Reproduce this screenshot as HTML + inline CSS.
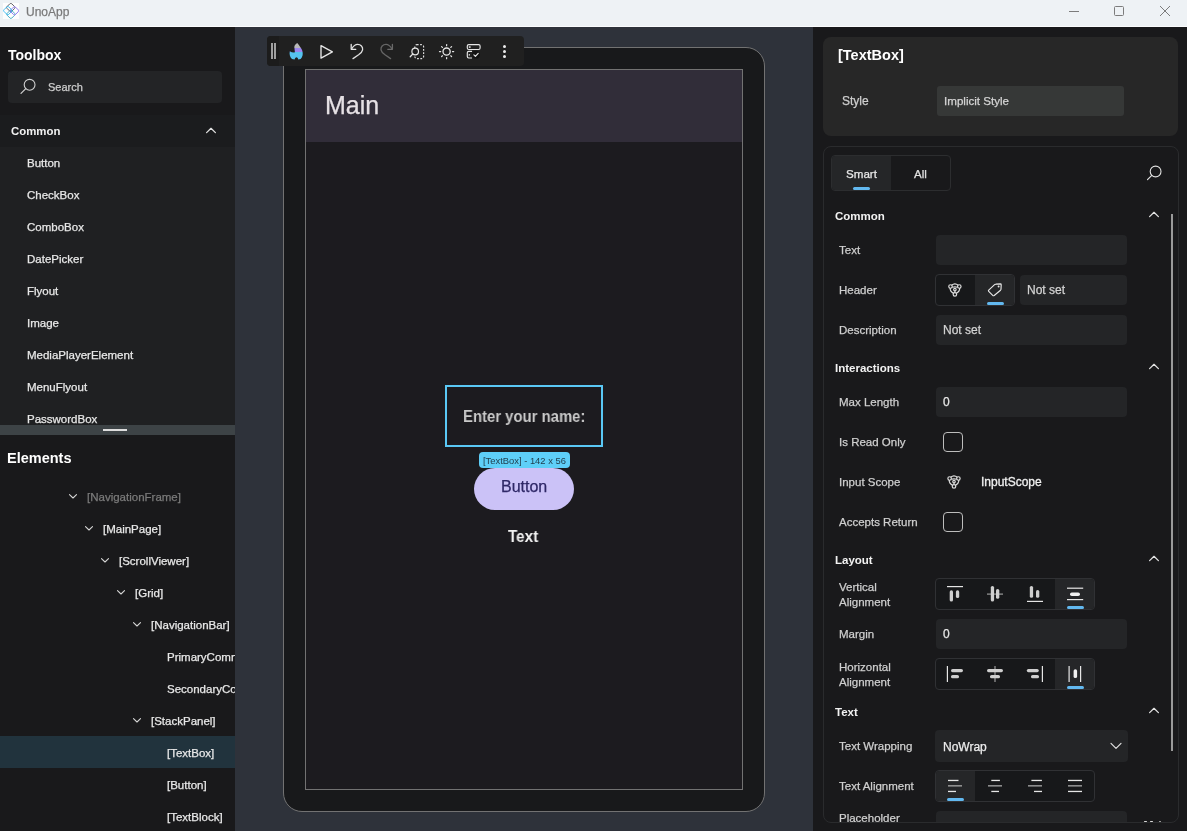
<!DOCTYPE html>
<html><head><meta charset="utf-8">
<style>
*{margin:0;padding:0;box-sizing:border-box}
html,body{width:1187px;height:831px;overflow:hidden;background:#19191b;font-family:"Liberation Sans",sans-serif;color:#e6e6e6;position:relative}
.a{position:absolute}
.t{position:absolute;white-space:nowrap;line-height:1;will-change:transform;-webkit-text-stroke:0.25px currentColor}
.tb{-webkit-text-stroke:0}
.clip{position:absolute;overflow:hidden}
.in{position:absolute}
</style></head><body>
<div class="a" style="left:0px;top:0px;width:1187px;height:27px;background:#eef2f5;"></div>
<div class="a" style="left:0px;top:26px;width:1187px;height:1px;background:#fbfcfd;"></div>
<svg class="a" style="left:3px;top:3px" width="16" height="16" viewBox="0 0 16 16"><rect width="16" height="16" fill="#fdfdfd"/><rect x="4.5" y="1.2000000000000002" width="6.6" height="6.6" rx="1.3" transform="rotate(45 7.8 4.5)" fill="none" stroke="#505058" stroke-width="0.85"/><rect x="4.6000000000000005" y="8.0" width="6.6" height="6.6" rx="1.3" transform="rotate(45 7.9 11.3)" fill="none" stroke="#3aa6c0" stroke-width="0.85"/><rect x="8.2" y="4.5" width="6.6" height="6.6" rx="1.3" transform="rotate(45 11.5 7.8)" fill="none" stroke="#8a6cf2" stroke-width="0.85"/><rect x="1.5" y="4.3" width="6.6" height="6.6" rx="1.3" transform="rotate(45 4.8 7.6)" fill="none" stroke="#2eb6f2" stroke-width="0.85"/></svg>
<div class="t" style="left:26px;top:5.84px;font-size:12px;color:#7a7a7a;">UnoApp</div>
<div class="a" style="left:1069px;top:11px;width:10px;height:1px;background:#7c7c7c;"></div>
<div class="a" style="left:1114px;top:6px;width:10px;height:10px;border:1px solid #7c7c7c;border-radius:1.5px"></div>
<svg class="a" style="left:1159px;top:5px" width="12" height="12" viewBox="0 0 12 12"><path d="M1 1L11 11M11 1L1 11" stroke="#7c7c7c" stroke-width="1"/></svg>
<div class="clip" style="left:0;top:27px;width:235px;height:804px;background:#19191b"><div class="in" style="left:0;top:-27px">
<div class="t tb" style="left:8px;top:48.15px;font-size:14px;color:#ffffff;font-weight:bold;">Toolbox</div>
<div class="a" style="left:8px;top:71px;width:214px;height:32px;background:#232426;border-radius:4px"></div>
<svg class="a" style="left:19px;top:78px" width="18" height="18" viewBox="0 0 18 18"><circle cx="10.6" cy="6.8" r="5.4" fill="none" stroke="#cfcfcf" stroke-width="1.1"/><path d="M6.8 10.6L2 15.4" stroke="#cfcfcf" stroke-width="1.2" stroke-linecap="round"/></svg>
<div class="t" style="left:48px;top:81.99px;font-size:11px;color:#cdcdcd;">Search</div>
<div class="a" style="left:0px;top:115px;width:235px;height:32px;background:#1b1c1e;"></div>
<div class="a" style="left:0px;top:147px;width:235px;height:278px;background:#1f2022;"></div>
<div class="t tb" style="left:11px;top:125.65px;font-size:11.4px;color:#f2f2f2;font-weight:bold;">Common</div>
<svg class="a" style="left:204px;top:126px" width="14" height="9" viewBox="0 0 14 9"><path d="M2.6 6.6L7 2.3L11.4 6.6" fill="none" stroke="#e2e2e2" stroke-width="1.25" stroke-linecap="round" stroke-linejoin="round"/></svg>
<div class="t" style="left:27px;top:157.77px;font-size:11.5px;color:#e8e8e8;">Button</div>
<div class="t" style="left:27px;top:189.77px;font-size:11.5px;color:#e8e8e8;">CheckBox</div>
<div class="t" style="left:27px;top:221.77px;font-size:11.5px;color:#e8e8e8;">ComboBox</div>
<div class="t" style="left:27px;top:253.77px;font-size:11.5px;color:#e8e8e8;">DatePicker</div>
<div class="t" style="left:27px;top:285.77px;font-size:11.5px;color:#e8e8e8;">Flyout</div>
<div class="t" style="left:27px;top:317.77px;font-size:11.5px;color:#e8e8e8;">Image</div>
<div class="t" style="left:27px;top:349.77px;font-size:11.5px;color:#e8e8e8;">MediaPlayerElement</div>
<div class="t" style="left:27px;top:381.77px;font-size:11.5px;color:#e8e8e8;">MenuFlyout</div>
<div class="t" style="left:27px;top:413.77px;font-size:11.5px;color:#e8e8e8;">PasswordBox</div>
<div class="a" style="left:0px;top:425px;width:235px;height:10px;background:#3d4346;"></div>
<div class="a" style="left:103px;top:429px;width:24px;height:2px;background:#dedede;"></div>
<div class="t tb" style="left:7px;top:450.93px;font-size:14.5px;color:#ffffff;font-weight:bold;">Elements</div>
<div class="a" style="left:0px;top:736px;width:235px;height:32px;background:#21333d;"></div>
<svg class="a" style="left:68px;top:493px" width="10" height="7" viewBox="0 0 10 7"><path d="M1.5 1.7L5 5L8.5 1.7" fill="none" stroke="#d6d6d6" stroke-width="1.1" stroke-linecap="round" stroke-linejoin="round"/></svg>
<div class="t" style="left:87px;top:491.57px;font-size:11.5px;color:#7a7a7a;">[NavigationFrame]</div>
<svg class="a" style="left:84px;top:525px" width="10" height="7" viewBox="0 0 10 7"><path d="M1.5 1.7L5 5L8.5 1.7" fill="none" stroke="#d6d6d6" stroke-width="1.1" stroke-linecap="round" stroke-linejoin="round"/></svg>
<div class="t" style="left:103px;top:523.57px;font-size:11.5px;color:#e8e8e8;">[MainPage]</div>
<svg class="a" style="left:100px;top:557px" width="10" height="7" viewBox="0 0 10 7"><path d="M1.5 1.7L5 5L8.5 1.7" fill="none" stroke="#d6d6d6" stroke-width="1.1" stroke-linecap="round" stroke-linejoin="round"/></svg>
<div class="t" style="left:119px;top:555.57px;font-size:11.5px;color:#e8e8e8;">[ScrollViewer]</div>
<svg class="a" style="left:116px;top:589px" width="10" height="7" viewBox="0 0 10 7"><path d="M1.5 1.7L5 5L8.5 1.7" fill="none" stroke="#d6d6d6" stroke-width="1.1" stroke-linecap="round" stroke-linejoin="round"/></svg>
<div class="t" style="left:135px;top:587.57px;font-size:11.5px;color:#e8e8e8;">[Grid]</div>
<svg class="a" style="left:132px;top:621px" width="10" height="7" viewBox="0 0 10 7"><path d="M1.5 1.7L5 5L8.5 1.7" fill="none" stroke="#d6d6d6" stroke-width="1.1" stroke-linecap="round" stroke-linejoin="round"/></svg>
<div class="t" style="left:151px;top:619.57px;font-size:11.5px;color:#e8e8e8;">[NavigationBar]</div>
<div class="t" style="left:167px;top:651.57px;font-size:11.5px;color:#e8e8e8;">PrimaryCommands</div>
<div class="t" style="left:167px;top:683.57px;font-size:11.5px;color:#e8e8e8;">SecondaryCommands</div>
<svg class="a" style="left:132px;top:717px" width="10" height="7" viewBox="0 0 10 7"><path d="M1.5 1.7L5 5L8.5 1.7" fill="none" stroke="#d6d6d6" stroke-width="1.1" stroke-linecap="round" stroke-linejoin="round"/></svg>
<div class="t" style="left:151px;top:715.57px;font-size:11.5px;color:#e8e8e8;">[StackPanel]</div>
<div class="t" style="left:167px;top:747.57px;font-size:11.5px;color:#e8e8e8;">[TextBox]</div>
<div class="t" style="left:167px;top:779.57px;font-size:11.5px;color:#e8e8e8;">[Button]</div>
<div class="t" style="left:167px;top:811.57px;font-size:11.5px;color:#e8e8e8;">[TextBlock]</div>
</div></div>
<div class="clip" style="left:235px;top:27px;width:578px;height:804px;background:#2e323a"><div class="in" style="left:-235px;top:-27px">
<div class="a" style="left:283px;top:47px;width:482px;height:765px;background:#18191b;border:1px solid #727272;border-radius:19px"></div>
<div class="a" style="left:305px;top:69px;width:438px;height:721px;background:#1c1b1f;border:1px solid #727272"></div>
<div class="a" style="left:306px;top:70px;width:436px;height:72px;background:#312d39;"></div>
<div class="t" style="left:324.5px;top:93.04px;font-size:25px;color:#e6e1e5;">Main</div>
<div class="a" style="left:267px;top:36px;width:257px;height:30px;background:#202020;border-radius:4px"></div>
<div class="a" style="left:267px;top:36px;width:12px;height:30px;background:#1c1c1c;border-radius:4px 0 0 4px"></div>
<div class="a" style="left:271px;top:43px;width:2px;height:16px;background:#a0a0a0;"></div>
<div class="a" style="left:274px;top:43px;width:2px;height:16px;background:#a0a0a0;"></div>
<svg class="a" style="left:286px;top:40px" width="20" height="22" viewBox="286 40 20 22"><defs><linearGradient id="fl" gradientUnits="userSpaceOnUse" x1="0" y1="43" x2="0" y2="59.5"><stop offset="0" stop-color="#b8b8b8"/><stop offset="0.3" stop-color="#b8b8b8"/><stop offset="0.3" stop-color="#9b86ee"/><stop offset="0.54" stop-color="#9b86ee"/><stop offset="0.54" stop-color="#56c3f0"/><stop offset="1" stop-color="#56c3f0"/></linearGradient></defs><path d="M297.2 43C294.8 44.4 293.8 46.6 294.5 48.6L294.9 52.3C293.4 52.9 291.6 52.4 289.8 51.3C289.2 54.3 289.9 57.3 292 59.1L294.6 59.4C295 58.2 295.8 57.3 296.6 57.3C297.4 57.3 298 58.4 298.3 59.4L300.6 59C302.6 57.4 303 54.4 302.6 52C302.2 49.6 300.8 47.6 299.7 46.2C298.9 45.1 298.2 44 297.2 43Z" fill="url(#fl)"/></svg>
<svg class="a" style="left:318px;top:43px" width="17" height="17" viewBox="318 43 17 17"><path d="M321 45.6L332.4 51.8L321 58.1Z" fill="none" stroke="#e6e6e6" stroke-width="1.35" stroke-linejoin="round"/></svg>
<svg class="a" style="left:348px;top:42px" width="18" height="19" viewBox="348 42 18 19"><path d="M351.2 44.4V49.3H355.8" fill="none" stroke="#e6e6e6" stroke-width="1.3" stroke-linecap="round" stroke-linejoin="round"/><path d="M351.6 48.8Q354.4 44.4 357.6 44.4C360.8 44.4 363 47 362.6 49.8C362.3 51.6 361 53 358.6 54.8L353 58.6" fill="none" stroke="#e0e0e0" stroke-width="1.3" stroke-linecap="round"/></svg>
<svg class="a" style="left:378px;top:42px" width="18" height="19" viewBox="378 42 18 19"><path d="M392.4 44.4V49.3H387.8" fill="none" stroke="#6a6a6a" stroke-width="1.3" stroke-linecap="round" stroke-linejoin="round"/><path d="M392 48.8Q389.2 44.4 386 44.4C382.8 44.4 380.6 47 381 49.8C381.3 51.6 382.6 53 385 54.8L390.6 58.6" fill="none" stroke="#666666" stroke-width="1.3" stroke-linecap="round"/></svg>
<svg class="a" style="left:406px;top:41px" width="22" height="21" viewBox="406 41 22 21"><rect x="414.8" y="44.7" width="8.8" height="13.9" rx="2" fill="none" stroke="#dcdcdc" stroke-width="1.2" stroke-dasharray="1.8 1.5"/><circle cx="415.2" cy="51.5" r="3.3" fill="#1f1f1f" stroke="#e6e6e6" stroke-width="1.2"/><path d="M412.9 53.9L410.2 56.8" stroke="#e6e6e6" stroke-width="1.3" stroke-linecap="round"/></svg>
<svg class="a" style="left:436px;top:41px" width="21" height="21" viewBox="436 41 21 21"><circle cx="446.6" cy="51.6" r="3.6" fill="none" stroke="#e6e6e6" stroke-width="1.3"/><path d="M452.50 51.60L453.70 51.60" stroke="#e6e6e6" stroke-width="1.2" stroke-linecap="round"/><path d="M450.77 55.77L451.62 56.62" stroke="#e6e6e6" stroke-width="1.2" stroke-linecap="round"/><path d="M446.60 57.50L446.60 58.70" stroke="#e6e6e6" stroke-width="1.2" stroke-linecap="round"/><path d="M442.43 55.77L441.58 56.62" stroke="#e6e6e6" stroke-width="1.2" stroke-linecap="round"/><path d="M440.70 51.60L439.50 51.60" stroke="#e6e6e6" stroke-width="1.2" stroke-linecap="round"/><path d="M442.43 47.43L441.58 46.58" stroke="#e6e6e6" stroke-width="1.2" stroke-linecap="round"/><path d="M446.60 45.70L446.60 44.50" stroke="#e6e6e6" stroke-width="1.2" stroke-linecap="round"/><path d="M450.77 47.43L451.62 46.58" stroke="#e6e6e6" stroke-width="1.2" stroke-linecap="round"/></svg>
<svg class="a" style="left:464px;top:41px" width="20" height="20" viewBox="464 41 20 20"><rect x="467.3" y="44.6" width="12.8" height="4.9" rx="1.5" fill="none" stroke="#e6e6e6" stroke-width="1.15"/><rect x="468.8" y="46.3" width="1.8" height="1.5" fill="#e6e6e6"/><path d="M472 51.4L468.7 51.4Q467.3 51.4 467.3 52.8L467.3 56.6Q467.3 58 468.7 58L472 58" fill="none" stroke="#e6e6e6" stroke-width="1.15"/><rect x="468.7" y="54.2" width="1.3" height="1.3" fill="#e6e6e6"/><circle cx="476" cy="54.7" r="3.9" fill="#131313"/><path d="M473.9 54.8L475.4 56.3L478.2 53.3" fill="none" stroke="#e6e6e6" stroke-width="1.15" stroke-linecap="round" stroke-linejoin="round"/></svg>
<div class="a" style="left:503px;top:45.2px;width:3px;height:3px;border-radius:50%;background:#ececec"></div>
<div class="a" style="left:503px;top:50.1px;width:3px;height:3px;border-radius:50%;background:#ececec"></div>
<div class="a" style="left:503px;top:55.0px;width:3px;height:3px;border-radius:50%;background:#ececec"></div>
<div class="a" style="left:445px;top:385px;width:158px;height:62px;border:2px solid #5ac8f5"></div>
<div class="t tb" style="left:463px;top:408.76px;font-size:16px;color:#c9c9c9;font-weight:bold;transform:scaleX(0.93);transform-origin:0 0;">Enter your name:</div>
<div class="a" style="left:479px;top:452px;width:91px;height:16px;background:#5ecff8;border-radius:4px"></div>
<div class="t tb" style="left:483px;top:456.04px;font-size:9.4px;color:#22404f;font-weight:bold;-webkit-text-stroke:0;font-weight:normal;">[TextBox] - 142 x 56</div>
<div class="a" style="left:474px;top:468px;width:100px;height:42px;background:#cbc2f7;border-radius:21px"></div>
<div class="t" style="left:501px;top:479.36px;font-size:16px;color:#2e2766;">Button</div>
<div class="t tb" style="left:508px;top:529.06px;font-size:16px;color:#f2f2f2;font-weight:bold;transform:scaleX(0.95);transform-origin:0 0;">Text</div>
</div></div>
<div class="a" style="left:823px;top:37px;width:355px;height:99px;background:#272727;border-radius:8px"></div>
<div class="t tb" style="left:838px;top:48.03px;font-size:14.5px;color:#ffffff;font-weight:bold;">[TextBox]</div>
<div class="t" style="left:842px;top:94.84px;font-size:12px;color:#cfcfcf;">Style</div>
<div class="a" style="left:937px;top:86px;width:187px;height:30px;background:#363837;border-radius:3px"></div>
<div class="t" style="left:944px;top:95.48px;font-size:11.6px;color:#d4d4d4;">Implicit Style</div>
<div class="a" style="left:823px;top:146px;width:356px;height:677px;border:1px solid #2a2b2d;border-radius:8px"></div>
<div class="clip" style="left:824px;top:147px;width:354px;height:675px;border-radius:0 0 7px 7px"><div class="in" style="left:-824px;top:-147px">
<div class="a" style="left:831px;top:155px;width:120px;height:36px;border:1px solid #2c2d2f;border-radius:4px;background:#19191b;overflow:hidden"><div class="a" style="left:0;top:0;width:59px;height:34px;background:#252628"></div></div>
<div class="t" style="left:846px;top:168.08px;font-size:11.6px;color:#e8e8e8;">Smart</div>
<div class="t" style="left:914px;top:168.08px;font-size:11.6px;color:#e0e0e0;">All</div>
<div class="a" style="left:853px;top:187px;width:17px;height:3px;background:#62b8ef;border-radius:1.5px"></div>
<svg class="a" style="left:1145px;top:164px" width="18" height="18" viewBox="0 0 18 18"><circle cx="10.6" cy="7.5" r="5.4" fill="none" stroke="#e0e0e0" stroke-width="1.1"/><path d="M6.8 11.3L2.5 15.6" stroke="#e0e0e0" stroke-width="1.2" stroke-linecap="round"/></svg>
<div class="a" style="left:1171px;top:214px;width:2px;height:537px;background:#9a9a9a;"></div>
<div class="t tb" style="left:835px;top:211.17px;font-size:11.5px;color:#f2f2f2;font-weight:bold;">Common</div>
<svg class="a" style="left:1147px;top:210px" width="14" height="9" viewBox="0 0 14 9"><path d="M2.6 6.6L7 2.3L11.4 6.6" fill="none" stroke="#e2e2e2" stroke-width="1.25" stroke-linecap="round" stroke-linejoin="round"/></svg>
<div class="t" style="left:839px;top:244.57px;font-size:11.5px;color:#cfcfcf;">Text</div>
<div class="a" style="left:936px;top:235px;width:191px;height:30px;background:#242527;border-radius:4px"></div>
<div class="t" style="left:839px;top:284.57px;font-size:11.5px;color:#cfcfcf;">Header</div>
<div class="a" style="left:935px;top:274px;width:80px;height:32px;border:1px solid #303134;border-radius:4px;background:#17181a;overflow:hidden"><div class="a" style="left:39px;top:0;width:39px;height:30px;background:#252628"></div></div>
<svg class="a" style="left:945px;top:280px" width="20" height="20" viewBox="945 280 20 20"><g fill="none" stroke="#dcdcdc" stroke-width="1.2" transform="translate(0.00 0.00)"><circle cx="950.5" cy="286.5" r="1.75"/><circle cx="959.3" cy="286.5" r="1.75"/><circle cx="954.9" cy="294.4" r="1.75"/><circle cx="954.9" cy="289.6" r="1.25"/><path d="M951.6 285.2Q954.9 282.4 958.2 285.2"/><path d="M952.2 287.3Q954.9 286.3 957.6 287.3"/><path d="M950.1 288.1Q950 291.6 953.5 293.4M959.7 288.1Q959.8 291.6 956.3 293.4M954.9 290.9V292.7"/></g></svg>
<svg class="a" style="left:985px;top:280px" width="20" height="20" viewBox="985 280 20 20"><path d="M988.7 290.1L994.6 284.6Q995.2 284.1 996 284.1L1000.4 283.9Q1001.2 283.9 1001.2 284.7L1001 289Q1001 289.7 1000.5 290.2L994.2 295.5Q993.4 296.1 992.7 295.4L988.7 291.4Q988.1 290.8 988.7 290.1Z" fill="none" stroke="#e8e8e8" stroke-width="1.15" stroke-linejoin="round"/><circle cx="998.6" cy="286.5" r="0.95" fill="#e8e8e8"/></svg>
<div class="a" style="left:987px;top:302px;width:17px;height:3px;background:#62b8ef;border-radius:1.5px"></div>
<div class="a" style="left:1020px;top:275px;width:107px;height:30px;background:#242527;border-radius:4px"></div>
<div class="t" style="left:1027px;top:284.14px;font-size:12px;color:#d4d4d4;">Not set</div>
<div class="t" style="left:839px;top:324.57px;font-size:11.5px;color:#cfcfcf;">Description</div>
<div class="a" style="left:936px;top:315px;width:191px;height:30px;background:#242527;border-radius:4px"></div>
<div class="t" style="left:943px;top:324.14px;font-size:12px;color:#d4d4d4;">Not set</div>
<div class="t tb" style="left:835px;top:363.17px;font-size:11.5px;color:#f2f2f2;font-weight:bold;">Interactions</div>
<svg class="a" style="left:1147px;top:362px" width="14" height="9" viewBox="0 0 14 9"><path d="M2.6 6.6L7 2.3L11.4 6.6" fill="none" stroke="#e2e2e2" stroke-width="1.25" stroke-linecap="round" stroke-linejoin="round"/></svg>
<div class="t" style="left:839px;top:396.57px;font-size:11.5px;color:#cfcfcf;">Max Length</div>
<div class="a" style="left:936px;top:387px;width:191px;height:30px;background:#242527;border-radius:4px"></div>
<div class="t" style="left:943px;top:396.14px;font-size:12px;color:#e8e8e8;">0</div>
<div class="t" style="left:839px;top:436.57px;font-size:11.5px;color:#cfcfcf;">Is Read Only</div>
<div class="a" style="left:943px;top:432px;width:20px;height:20px;border:1px solid #bdbdbd;border-radius:4px"></div>
<div class="t" style="left:839px;top:476.57px;font-size:11.5px;color:#cfcfcf;">Input Scope</div>
<svg class="a" style="left:944px;top:472px" width="20" height="20" viewBox="944 472 20 20"><g fill="none" stroke="#dcdcdc" stroke-width="1.2" transform="translate(-0.90 192.00)"><circle cx="950.5" cy="286.5" r="1.75"/><circle cx="959.3" cy="286.5" r="1.75"/><circle cx="954.9" cy="294.4" r="1.75"/><circle cx="954.9" cy="289.6" r="1.25"/><path d="M951.6 285.2Q954.9 282.4 958.2 285.2"/><path d="M952.2 287.3Q954.9 286.3 957.6 287.3"/><path d="M950.1 288.1Q950 291.6 953.5 293.4M959.7 288.1Q959.8 291.6 956.3 293.4M954.9 290.9V292.7"/></g></svg>
<div class="t" style="left:981px;top:475.64px;font-size:12px;color:#f0f0f0;-webkit-text-stroke:0.3px #f0f0f0">InputScope</div>
<div class="t" style="left:839px;top:516.57px;font-size:11.5px;color:#cfcfcf;">Accepts Return</div>
<div class="a" style="left:943px;top:512px;width:20px;height:20px;border:1px solid #bdbdbd;border-radius:4px"></div>
<div class="t tb" style="left:835px;top:554.77px;font-size:11.5px;color:#f2f2f2;font-weight:bold;">Layout</div>
<svg class="a" style="left:1147px;top:554px" width="14" height="9" viewBox="0 0 14 9"><path d="M2.6 6.6L7 2.3L11.4 6.6" fill="none" stroke="#e2e2e2" stroke-width="1.25" stroke-linecap="round" stroke-linejoin="round"/></svg>
<div class="t" style="left:839px;top:581.57px;font-size:11.5px;color:#cfcfcf;">Vertical</div>
<div class="t" style="left:839px;top:596.57px;font-size:11.5px;color:#cfcfcf;">Alignment</div>
<div class="a" style="left:935px;top:578px;width:160px;height:32px;border:1px solid #303134;border-radius:4px;background:#17181a;overflow:hidden"><div class="a" style="left:119px;top:0;width:39px;height:30px;background:#252628"></div></div>
<svg class="a" style="left:0;top:0" width="1187" height="831"><rect x="987" y="593.5" width="16" height="1.2" fill="#9a9a9a"/><g fill="#cfcfcf"><rect x="949.7" y="590.3" width="3.3" height="11.3" rx="1.6"/><rect x="955.9" y="590.3" width="3.3" height="7.7" rx="1.6"/><rect x="990.8" y="586" width="3.3" height="15.6" rx="1.6"/><rect x="996" y="588.9" width="3.3" height="9.9" rx="1.6"/><rect x="1029.8" y="586" width="3.3" height="11.8" rx="1.6"/><rect x="1036" y="589.9" width="3.3" height="7.9" rx="1.6"/><rect x="1070" y="592.4" width="10" height="3.6" rx="1.8" fill="#f0f0f0"/></g><g fill="#e6e6e6"><rect x="947" y="586" width="16" height="1.2"/><rect x="1027" y="600.8" width="16" height="1.2"/><rect x="1067" y="587.6" width="16.2" height="1.2"/><rect x="1067" y="599" width="16.2" height="1.2"/></g></svg>
<div class="a" style="left:1067px;top:606px;width:17px;height:3px;background:#62b8ef;border-radius:1.5px"></div>
<div class="t" style="left:839px;top:628.57px;font-size:11.5px;color:#cfcfcf;">Margin</div>
<div class="a" style="left:936px;top:619px;width:191px;height:30px;background:#242527;border-radius:4px"></div>
<div class="t" style="left:943px;top:628.14px;font-size:12px;color:#e8e8e8;">0</div>
<div class="t" style="left:839px;top:661.57px;font-size:11.5px;color:#cfcfcf;">Horizontal</div>
<div class="t" style="left:839px;top:676.57px;font-size:11.5px;color:#cfcfcf;">Alignment</div>
<div class="a" style="left:935px;top:658px;width:160px;height:32px;border:1px solid #303134;border-radius:4px;background:#17181a;overflow:hidden"><div class="a" style="left:119px;top:0;width:39px;height:30px;background:#252628"></div></div>
<svg class="a" style="left:0;top:0" width="1187" height="831"><rect x="994.4" y="666" width="1.2" height="16" fill="#9a9a9a"/><g fill="#cfcfcf"><rect x="951" y="668.9" width="12" height="3.3" rx="1.6"/><rect x="951" y="675" width="8" height="3.3" rx="1.6"/><rect x="987" y="668.9" width="16" height="3.3" rx="1.6"/><rect x="990" y="675" width="10" height="3.3" rx="1.6"/><rect x="1026.8" y="668.9" width="12" height="3.3" rx="1.6"/><rect x="1031" y="675" width="8" height="3.3" rx="1.6"/><rect x="1073.6" y="669.3" width="3.5" height="8.8" rx="1.7" fill="#f0f0f0"/></g><g fill="#e6e6e6"><rect x="946.8" y="666" width="1.2" height="16"/><rect x="1041.8" y="666" width="1.2" height="16"/><rect x="1068.5" y="666" width="1.2" height="16"/><rect x="1080" y="666" width="1.2" height="16"/></g></svg>
<div class="a" style="left:1067px;top:686px;width:17px;height:3px;background:#62b8ef;border-radius:1.5px"></div>
<div class="t tb" style="left:835px;top:707.27px;font-size:11.5px;color:#f2f2f2;font-weight:bold;">Text</div>
<svg class="a" style="left:1147px;top:706px" width="14" height="9" viewBox="0 0 14 9"><path d="M2.6 6.6L7 2.3L11.4 6.6" fill="none" stroke="#e2e2e2" stroke-width="1.25" stroke-linecap="round" stroke-linejoin="round"/></svg>
<div class="t" style="left:839px;top:740.57px;font-size:11.5px;color:#cfcfcf;">Text Wrapping</div>
<div class="a" style="left:935px;top:730px;width:193px;height:32px;background:#242527;border-radius:4px"></div>
<div class="t" style="left:943px;top:741.04px;font-size:12px;color:#ececec;">NoWrap</div>
<svg class="a" style="left:1109px;top:741px" width="14" height="10" viewBox="0 0 14 10"><path d="M2 2.4L7 7.4L12 2.4" fill="none" stroke="#e0e0e0" stroke-width="1.2" stroke-linecap="round" stroke-linejoin="round"/></svg>
<div class="t" style="left:839px;top:780.57px;font-size:11.5px;color:#cfcfcf;">Text Alignment</div>
<div class="a" style="left:935px;top:770px;width:160px;height:32px;border:1px solid #303134;border-radius:4px;background:#17181a;overflow:hidden"><div class="a" style="left:0px;top:0;width:39px;height:30px;background:#252628"></div></div>
<svg class="a" style="left:0;top:0" width="1187" height="831"><g fill="#e6e6e6"><rect x="948" y="779.8" width="10.5" height="1.3"/><rect x="948" y="790.8" width="8" height="1.3"/><rect x="948" y="785.2" width="14" height="1.3" fill="#a8a8a8"/><rect x="991.3" y="779.8" width="8.6" height="1.3"/><rect x="991.3" y="790.8" width="7.7" height="1.3"/><rect x="988" y="785.2" width="14" height="1.3" fill="#a8a8a8"/><rect x="1031.4" y="779.8" width="10.5" height="1.3"/><rect x="1034" y="790.8" width="8" height="1.3"/><rect x="1028" y="785.2" width="14" height="1.3" fill="#a8a8a8"/><rect x="1068" y="779.8" width="14" height="1.3"/><rect x="1068" y="790.8" width="14" height="1.3"/><rect x="1068" y="785.2" width="14" height="1.3" fill="#a8a8a8"/></g></svg>
<div class="a" style="left:947px;top:798px;width:17px;height:3px;background:#62b8ef;border-radius:1.5px"></div>
<div class="t" style="left:839px;top:813.47px;font-size:11.5px;color:#cfcfcf;">Placeholder</div>
<div class="a" style="left:936px;top:811px;width:191px;height:30px;background:#242527;border-radius:4px"></div>
<div class="a" style="left:1144px;top:820.6px;width:3px;height:1.4px;background:#d8d8d8;border-radius:1px"></div>
<div class="a" style="left:1150px;top:820.6px;width:2.5px;height:1.4px;background:#d8d8d8;border-radius:1px"></div>
<div class="a" style="left:1158.5px;top:820.8px;width:2px;height:1.2px;background:#9a9a9a;"></div>
</div></div>
</body></html>
